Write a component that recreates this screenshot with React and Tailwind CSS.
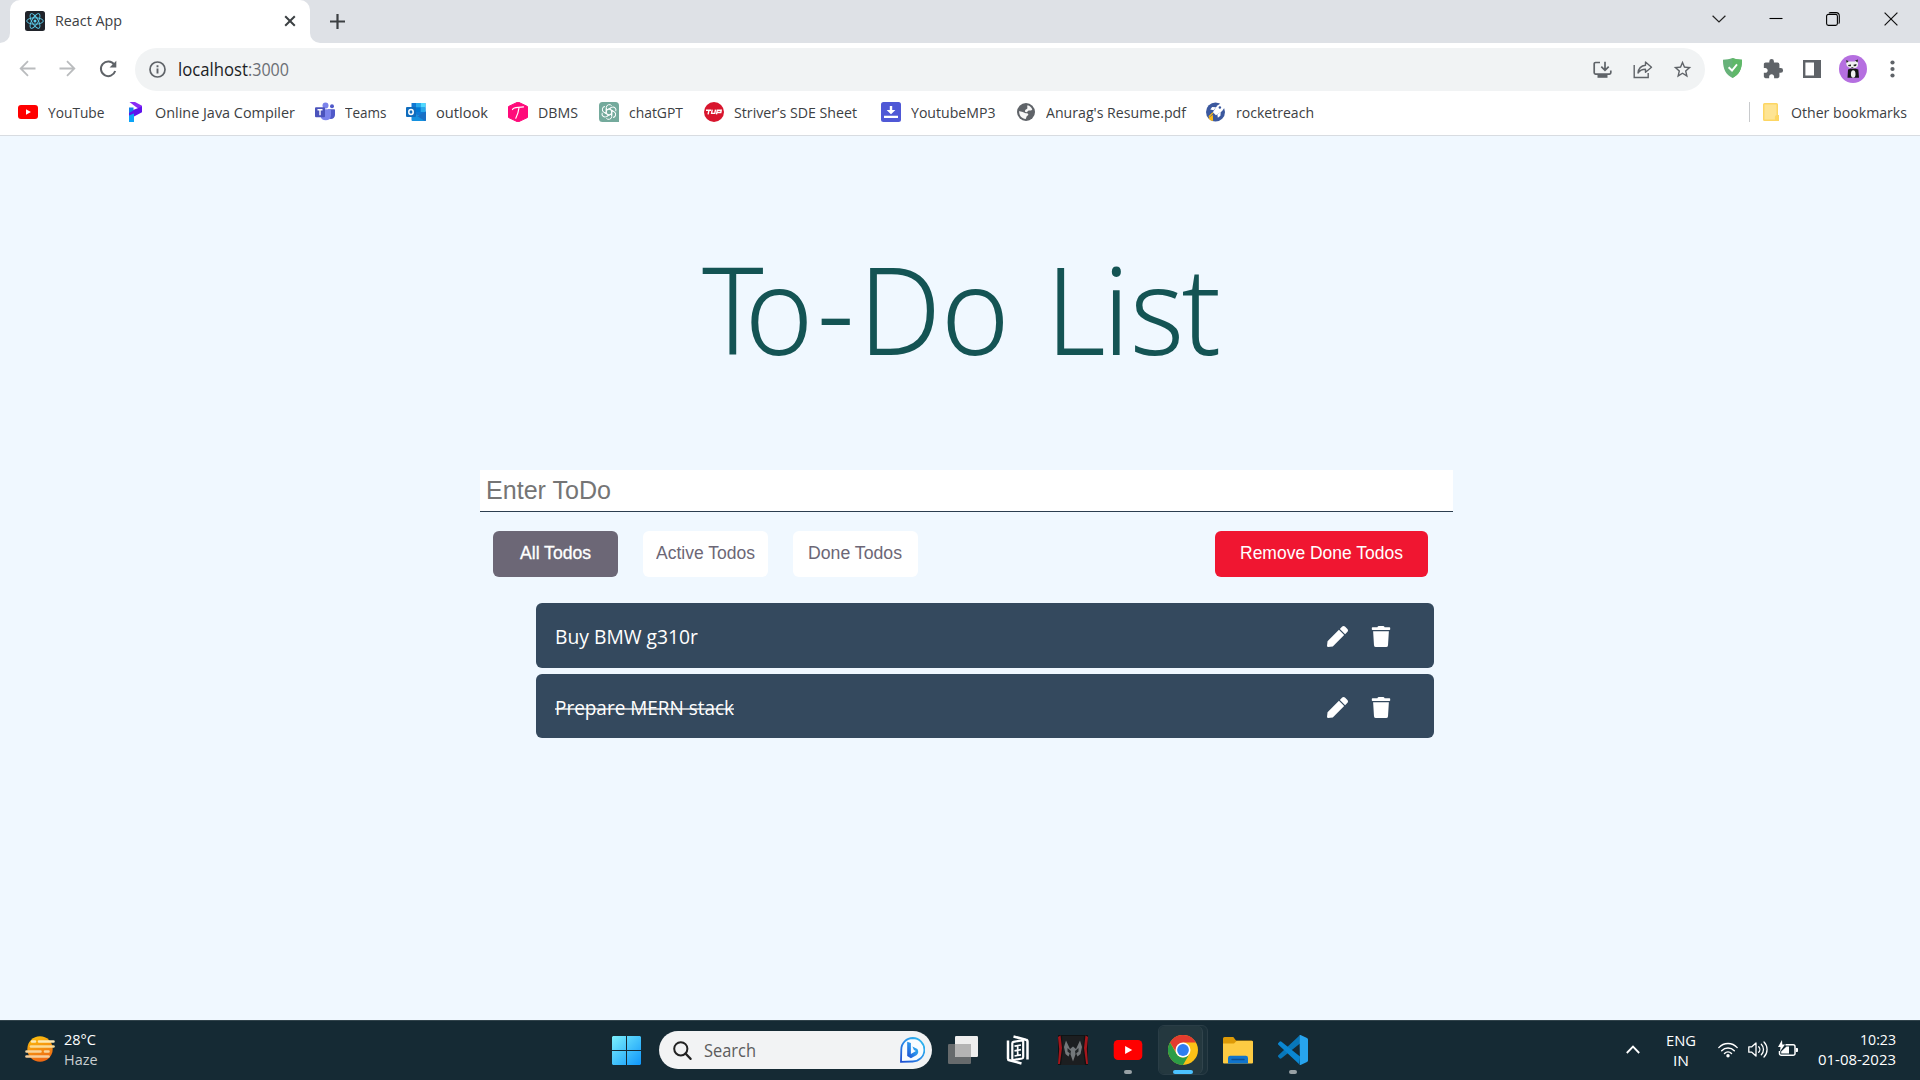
import React, { useLayoutEffect, useRef } from "react";
import { FaPen, FaTrash } from "react-icons/fa";
import { MdExtension, MdStarBorder } from "react-icons/md";

/* Single line of text, condensed or widened to a given width in pixels. */
function Fit({ w, className = "", children }) {
  const ref = useRef(null);
  useLayoutEffect(() => {
    const el = ref.current;
    el.style.transform = "none";
    const natural = el.getBoundingClientRect().width;
    if (natural > 0) el.style.transform = `scaleX(${w / natural})`;
  }, [w, children]);
  return (
    <span className={`block shrink-0 whitespace-nowrap ${className}`} style={{ width: w }}>
      <span ref={ref} className="inline-block origin-left whitespace-pre">
        {children}
      </span>
    </span>
  );
}

function ReactLogo() {
  return (
    <svg width="20" height="20" viewBox="0 0 20 20" fill="none" stroke="#5ccfee" strokeWidth="0.9">
      <rect width="20" height="20" rx="2.5" fill="#20232a" stroke="none" />
      <ellipse cx="10" cy="10" rx="8.3" ry="3.2" />
      <ellipse cx="10" cy="10" rx="8.3" ry="3.2" transform="rotate(60 10 10)" />
      <ellipse cx="10" cy="10" rx="8.3" ry="3.2" transform="rotate(120 10 10)" />
      <circle cx="10" cy="10" r="1.5" fill="#5ccfee" stroke="none" />
    </svg>
  );
}

function YouTubeIcon({ className }) {
  return (
    <svg className={className} viewBox="0 0 30 21">
      <rect width="30" height="21" rx="4.5" fill="#ff0000" />
      <path d="M12 6.2v8.6l7.4-4.3z" fill="#fff" />
    </svg>
  );
}

function TabStrip() {
  return (
    <div className="flex h-[43px] bg-[#dee1e6]">
      <div className="flex w-[10px] items-end bg-white">
        <div className="h-full w-full rounded-br-[10px] bg-[#dee1e6]" />
      </div>
      <div className="w-[300px] bg-[#dee1e6]">
        <div className="flex h-[43px] items-center rounded-t-[10px] bg-white pb-[1px] pl-[15px]">
          <ReactLogo />
          <Fit w={67} className="-mt-[2px] ml-[10px] text-[15px] leading-[20px] text-[#3c4043]">React App</Fit>
          <svg className="ml-[162px]" width="12" height="12" viewBox="0 0 12 12" stroke="#3c4043" strokeWidth="2">
            <path d="M1.2 1.2l9.6 9.6M10.8 1.2l-9.6 9.6" />
          </svg>
        </div>
      </div>
      <div className="w-[10px] bg-white">
        <div className="h-full w-full rounded-bl-[10px] bg-[#dee1e6]" />
      </div>
      <svg className="ml-[9px] mt-[13px]" width="17" height="17" viewBox="0 0 17 17" stroke="#3c4043" strokeWidth="2.2">
        <path d="M1 8.5h15M8.500 1v15" />
      </svg>
      <div className="ml-auto flex h-[37px] items-center pr-[22px]">
        <svg width="14" height="8" viewBox="0 0 14 8" fill="none" stroke="#222" strokeWidth="1.2">
          <path d="M.6.8L7 7 13.4.8" />
        </svg>
        <svg className="ml-[43px]" width="14" height="14" viewBox="0 0 14 14" stroke="#000" strokeWidth="1.1">
          <path d="M.5 6.500h13" />
        </svg>
        <svg className="ml-[43px]" width="14" height="14" viewBox="0 0 14 14" fill="none" stroke="#000" strokeWidth="1.1">
          <rect x=".6" y="2.4" width="10.8" height="11" rx="1.8" />
          <path d="M3 1.2c.5-.5 1-.6 1.700-.6H10a3.300 3.300 0 0 1 3.300 3.300v6c0 .7-.2 1.200-.6 1.700" />
        </svg>
        <svg className="ml-[44px]" width="14" height="14" viewBox="0 0 14 14" stroke="#111" strokeWidth="1.2">
          <path d="M.6.6l12.800 12.800M13.400.6L.6 13.400" />
        </svg>
      </div>
    </div>
  );
}

function Toolbar() {
  return (
    <div className="flex h-[53px] items-center">
      <svg className="ml-[19px] mt-[-2px]" width="17" height="17" viewBox="0 0 17 17" fill="none" stroke="#babcbe" strokeWidth="1.800">
        <path d="M16.500 8.500H2M9 1.200L1.700 8.500 9 15.800" />
      </svg>
      <svg className="ml-[23px] mt-[-2px]" width="17" height="17" viewBox="0 0 17 17" fill="none" stroke="#babcbe" strokeWidth="1.800">
        <path d="M.5 8.500H15M8 1.200l7.300 7.300L8 15.800" />
      </svg>
      <svg className="ml-[23px] mt-[-1px]" width="18" height="18" viewBox="0 0 18 18" fill="none" stroke="#5f6368" strokeWidth="2">
        <path d="M15.200 4.600A7.300 7.300 0 1 0 16.200 11" />
        <path d="M17.300.8v6.700h-6.700z" fill="#5f6368" stroke="none" />
      </svg>
      <div className="ml-[18px] flex h-[43px] w-[1570px] items-center rounded-full bg-[#f1f3f4] pl-[14px]">
        <svg width="17" height="17" viewBox="0 0 17 17" fill="none" stroke="#5f6368" strokeWidth="1.700">
          <circle cx="8.500" cy="8.500" r="7.500" />
          <path d="M8.500 7.500v5M8.500 4.300v1.900" strokeWidth="1.900" />
        </svg>
        <Fit w={70} className="-mt-[2px] ml-[12px] text-[17.500px] leading-[24px] text-[#202124]">localhost</Fit>
        <Fit w={41} className="-mt-[2px] text-[17.500px] leading-[24px] text-[#6b6f74]">:3000</Fit>
        <svg className="ml-auto" width="19" height="18" viewBox="0 0 19 18" fill="none" stroke="#5f6368" strokeWidth="1.700">
          <path d="M7 1.500H2.500a1.300 1.300 0 0 0-1.300 1.300v9a1.300 1.300 0 0 0 1.300 1.300h14a1.300 1.300 0 0 0 1.300-1.300V9.500M12 .8v8M8.300 5.600L12 9.300l3.700-3.700" />
          <path d="M4.500 14h10v2.800h-10z" fill="#5f6368" stroke="none" />
        </svg>
        <svg className="ml-[21px]" width="20" height="19" viewBox="0 0 20 19" fill="none" stroke="#5f6368" strokeWidth="1.400">
          <path d="M1.200 5v12.500h14V13" />
          <path d="M12.500 2l6 5.200-6 5V9.300C8.800 9.300 6.700 10.500 5 13c.4-4.300 3-7.300 7.500-7.800z" strokeLinejoin="round" />
        </svg>
        <MdStarBorder className="ml-[19px] mr-[12px] size-[21px] text-[#5f6368]" />
      </div>
      <svg className="ml-[18px] mt-[-3px]" width="19" height="20" viewBox="0 0 19 20">
        <path d="M9.500 0c3 1.200 6 1.500 9.500 1.700C19.200 9.500 17 16.500 9.500 20 2 16.500-.2 9.500 0 1.700 3.500 1.500 6.500 1.200 9.500 0z" fill="#67b279" />
        <path d="M9.500 0v20C17 16.500 19.200 9.500 19 1.700 15.500 1.500 12.500 1.200 9.500 0z" fill="#5fb868" />
        <path d="M5.600 9.300L9 12.500l5-6.200" stroke="#fff" strokeWidth="1.900" fill="none" />
      </svg>
      <MdExtension className="ml-[20px] mt-[-2px] size-[22px] text-[#5f6368]" />
      <svg className="ml-[19px] mt-[-1px]" width="18" height="18" viewBox="0 0 18 18">
        <path d="M0 0h18v18H0zM2.400 2.400v13.200h8.600V2.400z" fill="#5f6368" fillRule="evenodd" />
      </svg>
      <svg className="ml-[18px] mt-[-1px]" width="28" height="28" viewBox="0 0 28 28">
        <circle cx="14" cy="14" r="14" fill="#b56fe0" />
        <path d="M9 14.500c2-1.500 8-1.500 10.300 0l.7 8.300H8.500z" fill="#141414" />
        <ellipse cx="14.200" cy="19" rx="2.300" ry="3.800" fill="#f0f0f0" />
        <path d="M7.300 6l2.400.4h6l3-1.400.3 3.200c.4 3.600-1.500 5-4.900 5.100-3.600 0-6.200-.9-6.800-4.200z" fill="#f0f0f0" />
        <path d="M7 5.300l2.700.8-2 2zM19 4.600l-3 .9 2.600 2zM9 10l3-.5v1.800H9.600zM14.500 9.700l3-.7-.4 2-2.300.3zM12.300 12h2v.7h-2z" fill="#222" />
      </svg>
      <svg className="ml-[23px] mt-[-1px]" width="5" height="18" viewBox="0 0 5 18" fill="#5f6368">
        <circle cx="2.500" cy="2.500" r="2.100" />
        <circle cx="2.500" cy="9" r="2.100" />
        <circle cx="2.500" cy="15.500" r="2.100" />
      </svg>
    </div>
  );
}

const icons = {
  youtube: <YouTubeIcon className="h-[14px] w-[20px]" />,
  java: (
    <svg width="20" height="20" viewBox="0 0 20 20">
      <path d="M4.500 0h5.500l7 3.800v5l-6-3.800z" fill="#8a2bf5" />
      <path d="M4 9.500l8-3 5-2v5.800L9 14.500 4 16z" fill="#5f12ec" />
      <path d="M4 5.500h4.500v3L4 11z" fill="#1480e8" />
      <path d="M4 13.500l5-2V20H4z" fill="#0ba4f7" />
    </svg>
  ),
  teams: (
    <svg width="20" height="20" viewBox="0 0 20 20">
      <circle cx="10.500" cy="3.500" r="3" fill="#7b83eb" />
      <circle cx="17" cy="4.200" r="2" fill="#5059c9" />
      <path d="M13 7.300h6.300a.7.700 0 0 1 .7.700v5a4 4 0 0 1-4.500 4L13 16z" fill="#5059c9" />
      <path d="M6 7.300h9a1 1 0 0 1 1 1v5.500a5.300 5.300 0 0 1-10.500 0z" fill="#7b83eb" />
      <rect y="5.200" width="10" height="10" rx="1" fill="#4b53bc" />
      <path d="M2.500 7.800h5M5 7.800v5.400" stroke="#fff" strokeWidth="1.400" />
    </svg>
  ),
  outlook: (
    <svg width="20" height="20" viewBox="0 0 20 20">
      <rect x="5.500" y="1" width="14" height="12" rx=".6" fill="#0f78d4" />
      <path d="M10 1h4.700v4.500H10z" fill="#28a8ea" />
      <path d="M14.700 1h4.800v4.500h-4.800z" fill="#50d9ff" />
      <path d="M10 5.500h4.700V10H10z" fill="#0078d4" />
      <path d="M14.700 5.500h4.800V10h-4.800z" fill="#28a8ea" />
      <path d="M5.500 9.500l7 4 7.500-4V18a1 1 0 0 1-1 1H6.500a1 1 0 0 1-1-1z" fill="#1490df" />
      <path d="M20 9.500V18a1 1 0 0 1-1 1l-8-5z" fill="#1a6fc4" />
      <rect y="5" width="10" height="10" rx="1" fill="#0f6cbd" />
      <ellipse cx="5" cy="10" rx="2.200" ry="2.500" fill="none" stroke="#fff" strokeWidth="1.500" />
    </svg>
  ),
  dbms: (
    <svg width="20" height="20" viewBox="0 0 20 20">
      <path d="M10 0l9.500 4.500v11L10 20 .5 15.500v-11z" fill="#ff0a7a" stroke="#ff0a7a" strokeLinejoin="round" />
      <path d="M4.500 7.500C6 4.500 10 6 15.500 4.800M11 5.800C10.500 10 9.500 13 7.800 16.200" stroke="#fff" strokeWidth="1.200" fill="none" strokeLinecap="round" />
    </svg>
  ),
  gpt: (
    <svg width="20" height="20" viewBox="0 0 20 20" fill="none">
      <path d="M3.500 0h13A3.500 3.500 0 0 1 20 3.500V20H3.500A3.500 3.500 0 0 1 0 16.500v-13A3.500 3.500 0 0 1 3.500 0z" fill="#74aa9c" />
      <g stroke="#fff" strokeWidth="1">
        {[0, 60, 120, 180, 240, 300].map((a) => (
          <path key={a} transform={`rotate(${a} 10 10)`} d="M7.300 11.500V5.500a3 3 0 0 1 5.400-1.700M7.300 8.400L10.500 6.500a3 3 0 0 1 1.500-.4" />
        ))}
      </g>
    </svg>
  ),
  tuf: (
    <svg width="20" height="20" viewBox="0 0 20 20" fill="none">
      <circle cx="10" cy="10" r="10" fill="#d8152d" />
      <path d="M2 8.300h5M4.900 8.300l-.8 4M8.200 7.700l-.6 3.700h3.200l.7-3.700M12.500 12.300l.8-4h3.900l-.4 2.200h-3.500" stroke="#fff" strokeWidth="1.400" />
    </svg>
  ),
  mp3: (
    <svg width="20" height="20" viewBox="0 0 20 20">
      <rect width="20" height="20" rx="2.500" fill="#4f58d6" />
      <path d="M8.800 4h2.400v4h3.200L10 12.300 5.600 8h3.200zM3 13.700h14v2.400H3z" fill="#fff" />
    </svg>
  ),
  globe: (
    <svg width="20" height="20" viewBox="0 0 20 20">
      <circle cx="10" cy="10" r="9" fill="#5f6368" />
      <path d="M11.500 3.200c2.200.6 4 2 4.800 4.300-1 1.300-2.300.8-3.600 1.100-1.400.4-.8 1.500-2.200 1.600-1.300.1-1.900-.9-1.300-2 .6-1 1.900-.8 2.200-1.900.2-.9-.5-1.700.1-3.100z" fill="#f7f7f7" />
      <path d="M3.200 9c1.900.6 3.800.8 5.300 1.700 1.500.8 3.500.3 3.800 1.500.2 1-1.300 1.300-1.700 2.300-.4.900-.3 1.600-.9 2.400C6 16.900 2.800 13.500 3.200 9z" fill="#f7f7f7" />
    </svg>
  ),
  rocket: (
    <svg width="20" height="20" viewBox="0 0 20 20">
      <circle cx="10" cy="10" r="10" fill="#3b589e" />
      <path d="M19.800.3c.5 3.700-.9 7-4 9.700l-5.300 3.500-3.300-3.300L10.500 5C13.200 1.700 16.200 0 19.800.3z" fill="#fff" />
      <path d="M10.500 5L6.500 4.800 4.500 7.300 8 8.200zM15.500 10l-.3 4-2.700 2-.6-3.500z" fill="#fff" />
      <circle cx="14.600" cy="5.300" r="1.300" fill="#3b589e" />
      <path d="M7.200 12.800L2.600 16.200 4.500 18.600 7.500 19.500z" fill="#fdb913" />
      <path d="M7.300 10.800L3 15" stroke="#fdb913" strokeWidth="1.200" />
    </svg>
  ),
};

const bookmarks = [
  { icon: "youtube", label: "YouTube", w: 56.5, slot: "w-[107px] gap-[10px]" },
  { icon: "java", label: "Online Java Compiler", w: 140, slot: "w-[190px] gap-[10px]" },
  { icon: "teams", label: "Teams", w: 41.5, slot: "w-[91px] gap-[10px]" },
  { icon: "outlook", label: "outlook", w: 52, slot: "w-[102px] gap-[10px]" },
  { icon: "dbms", label: "DBMS", w: 40, slot: "w-[91px] gap-[10px]" },
  { icon: "gpt", label: "chatGPT", w: 54, slot: "w-[105px] gap-[10px]" },
  { icon: "tuf", label: "Striver’s SDE Sheet", w: 123, slot: "w-[177px] gap-[10px]" },
  { icon: "mp3", label: "YoutubeMP3", w: 84.5, slot: "w-[135px] gap-[10px]" },
  { icon: "globe", label: "Anurag's Resume.pdf", w: 140, slot: "w-[190px] gap-[10px]" },
  { icon: "rocket", label: "rocketreach", w: 78, slot: "w-[108px] gap-[11px]" },
];

function BookmarksBar() {
  return (
    <div className="flex h-[40px] items-center border-b border-[#d8dce1] pb-[7px] pl-[18px] pr-[13px] text-[15px] leading-[20px] text-[#3c4043]">
      {bookmarks.map((b) => (
        <div key={b.label} className={`flex shrink-0 items-center ${b.slot}`}>
          {icons[b.icon]}
          <Fit w={b.w}>{b.label}</Fit>
        </div>
      ))}
      <div className="ml-auto h-[20px] w-px bg-[#c8cacd]" />
      <svg className="ml-[13px]" width="16" height="18" viewBox="0 0 16 18">
        <path d="M1.500 0h12A1.500 1.500 0 0 1 15 1.500V12a2 2 0 0 1 0 6H1.500A1.500 1.500 0 0 1 0 16.500v-15A1.500 1.500 0 0 1 1.500 0z" fill="#fdd663" />
        <path d="M1.500 1.500h12V12c-1.500.6-2 2-1.500 4.500H1.500z" fill="#fee493" />
      </svg>
      <Fit w={116} className="ml-[12px]">Other bookmarks</Fit>
    </div>
  );
}

function FilterButton({ w, active, children }) {
  return (
    <button
      className={`flex h-[46px] w-[125px] justify-center rounded-[6px] pr-[1px] pt-[11px] text-[17.500px] leading-[22px] ${
        active ? "bg-[#6c6776] text-white [-webkit-text-stroke:0.3px_white]" : "bg-white text-[#6c6776]"
      }`}
    >
      <Fit w={w}>{children}</Fit>
    </button>
  );
}

function TodoRow({ w, done, className, children }) {
  return (
    <li className={`flex items-center rounded-[6px] bg-[#34495e] pl-[19px] pr-[43px] text-white ${className}`}>
      <div className="grid">
        <Fit w={w} className="col-start-1 row-start-1 text-[20px] leading-[28px]">{children}</Fit>
        {done && <div className="col-start-1 row-start-1 mt-[14px] h-[2px] bg-[#bdc3c7]" />}
      </div>
      <FaPen className="-mt-[2px] ml-auto size-[21px]" />
      <FaTrash className="-mt-[2px] ml-[23px] h-[21px] w-[20px]" />
    </li>
  );
}

function TodoPage() {
  return (
    <main className="h-[884px] bg-[#f0f8ff]">
      <h1 className="flex pl-[702px] pt-[82px] font-['Noto_Sans'] text-[122px] font-[260] leading-[180px] text-[#145454]">
        <Fit w={519}>
          <span className="tracking-[-20px]">T</span>
          <span className="tracking-[4px]">o-</span>
          <span className="tracking-[0px]">D</span>
          <span className="tracking-[3px]">o </span>
          <span className="tracking-[-3px]">L</span>
          <span className="tracking-[0px]">i</span>
          <span className="tracking-[-3px]">s</span>
          <span>t</span>
        </Fit>
      </h1>
      <div className="ml-[480px] mt-[72px] w-[973px] font-['Liberation_Sans',Arial,sans-serif]">
        <div className="flex h-[42px] items-center border-b border-[#2c3e50] bg-white pb-[2px] pl-[6px] text-[25px] leading-[30px] text-[#757575]">
          <Fit w={125}>Enter ToDo</Fit>
        </div>
        <div className="mt-[19px] flex gap-[25px] pl-[13px] pr-[25px]">
          <FilterButton w={71} active>All Todos</FilterButton>
          <FilterButton w={99}>Active Todos</FilterButton>
          <FilterButton w={94}>Done Todos</FilterButton>
          <button className="ml-auto flex h-[46px] w-[213px] justify-center rounded-[6px] bg-[#f01631] pr-[1px] pt-[11px] text-[17.500px] leading-[22px] text-white">
            <Fit w={163}>Remove Done Todos</Fit>
          </button>
        </div>
      </div>
      <ul className="ml-[536px] mt-[26px] flex w-[898px] flex-col gap-[6px]">
        <TodoRow w={143} className="h-[65px] pt-[3px]">Buy BMW g310r</TodoRow>
        <TodoRow w={179} done className="h-[64px] pt-[4px]">Prepare MERN stack</TodoRow>
      </ul>
    </main>
  );
}

function WeatherIcon() {
  return (
    <svg width="30" height="28" viewBox="0 0 30 28" strokeLinecap="round" strokeWidth="2.600">
      <defs>
        <linearGradient id="sun" x1="0" y1="0" x2="0.3" y2="1">
          <stop offset="0" stopColor="#fdc60d" />
          <stop offset="1" stopColor="#ee6a13" />
        </linearGradient>
      </defs>
      <circle cx="15" cy="14" r="12.700" fill="url(#sun)" />
      <path d="M7 6.500h3M14 6.500h14.500" stroke="#fde9b5" />
      <path d="M6 11.500h22.500" stroke="#fbdc96" />
      <path d="M1.500 16.500h14M20 16.500h3.500" stroke="#f8d49a" />
      <path d="M1.500 21.500h22" stroke="#f8cd98" />
    </svg>
  );
}

function WindowsIcon() {
  return (
    <svg width="29" height="29" viewBox="0 0 29 29">
      <defs>
        <linearGradient id="win" x1="0" y1="0" x2="1" y2="1" gradientUnits="objectBoundingBox">
          <stop offset="0" stopColor="#7cf0fd" />
          <stop offset="0.5" stopColor="#44c3fb" />
          <stop offset="1" stopColor="#0f96fb" />
        </linearGradient>
      </defs>
      <path d="M1 0h13v14H0V1zM15 0h13l1 1v13H15zM0 15h14v14H1l-1-1zM15 15h14v13l-1 1H15z" fill="url(#win)" />
    </svg>
  );
}

function BingIcon() {
  return (
    <svg width="25" height="26" viewBox="0 0 25 26">
      <defs>
        <linearGradient id="bing" x1="1" y1="0" x2="0" y2="1">
          <stop offset="0" stopColor="#2fc0ee" />
          <stop offset="0.5" stopColor="#2a8eea" />
          <stop offset="1" stopColor="#1b4bd0" />
        </linearGradient>
      </defs>
      <path d="M12.800 1A11.500 11.500 0 1 1 12.500 24.500L1 24.800 1.300 12.500A11.500 11.500 0 0 1 12.800 1z" fill="#f8fcff" stroke="url(#bing)" strokeWidth="1.800" />
      <path d="M7.200 4.700l3.700 1.300v11l5-2.900-2-1.200-1.500-3.500 5 2.600c1.500 2 1 5-1 6.200l-5.500 3.100-3.700-2.200z" fill="url(#bing)" />
    </svg>
  );
}

function TaskViewIcon() {
  return (
    <svg width="30" height="28" viewBox="0 0 30 28">
      <rect y="8" width="23" height="20" rx="1.200" fill="#666a6c" />
      <rect x="7" y="0" width="23" height="21" rx="1.200" fill="#eeeeee" />
      <path d="M7 8h16v13H8.200A1.200 1.200 0 0 1 7 19.800z" fill="#b4b4b4" />
    </svg>
  );
}

function CardsIcon() {
  return (
    <svg width="24" height="30" viewBox="0 0 24 30" fill="none" stroke="#fff" strokeWidth="2.200">
      <path d="M6.300 8.300a1.500 1.500 0 0 1 1.200-1.500l8.500-1.500a1 1 0 0 1 1.200 1V22a1.500 1.500 0 0 1-1.200 1.500L7.500 25a1 1 0 0 1-1.200-1z" />
      <path d="M7.500 1.500l12.300 3.200a2 2 0 0 1 1.700 2V24.500" strokeWidth="2.500" />
      <path d="M2 5.500v17.800a2 2 0 0 0 1.500 2l12 3.200" strokeWidth="2.500" />
      <path d="M8.500 11.200l6.500-1.200M11.700 10.600v4.200M8.500 15.800l6.500-1.200M8.500 21l6.500-1.200M11.700 15.500v4.800" strokeWidth="1.700" />
    </svg>
  );
}

function PredatorIcon() {
  return (
    <svg width="30" height="30" viewBox="0 0 30 30">
      <path d="M0 0h30v30H0z" fill="#101314" />
      <path d="M4 1h22l-1 14 2 15H3l2-15z" fill="#1c1e20" />
      <path d="M0 2l2.500-1.500L4 13 1.800 29H0l1.200-15zM30 2l-2.500-1.500L26 13l2.200 16H30l-1.200-15z" fill="#a5161c" />
      <path d="M8 5.500l4 8.500 3-2.500 3 2.500 4-8.500 2 6.500-1.500 7-3 2.500-1.500-3.500-3 8.500-3-8.500-1.500 3.500-3-2.500L6 12z" fill="#74787b" />
      <path d="M9.500 13l3.500 3-.5 3-3-2.500zM20.500 13L17 16l.5 3 3-2.500z" fill="#222628" />
    </svg>
  );
}

function ChromeIcon() {
  return (
    <svg width="30" height="30" viewBox="0 0 30 30">
      <circle cx="15" cy="15" r="15" fill="#fbc116" />
      <path d="M2 7.500A15 15 0 0 1 28 7.500H15L9 18.500z" fill="#e33b2e" />
      <path d="M2 7.500A15 15 0 0 0 15 30l6.500-11.300A7.500 7.500 0 0 1 8.500 18.700z" fill="#2c9d46" />
      <circle cx="15" cy="15" r="7.500" fill="#fff" />
      <circle cx="15" cy="15" r="5.900" fill="#2f7df0" />
    </svg>
  );
}

function FolderIcon() {
  return (
    <svg width="30" height="27" viewBox="0 0 30 27">
      <path d="M0 1.500A1.500 1.500 0 0 1 1.500 0h8.800l2.700 3.500h15.500A1.500 1.500 0 0 1 30 5v8H0z" fill="#dd9a07" />
      <path d="M0 6.500h11l2.500-2.500H29a1 1 0 0 1 1 1v20.500a1 1 0 0 1-1 1H1a1 1 0 0 1-1-1z" fill="#fdcb43" />
      <path d="M5 26.500V21a2.300 2.300 0 0 1 2.300-2.300h15.400A2.300 2.300 0 0 1 25 21v5.500z" fill="#1074cc" />
      <path d="M9 22.500h12" stroke="#0b4f93" strokeWidth="1.400" strokeLinecap="round" />
    </svg>
  );
}

function VSCodeIcon() {
  return (
    <svg width="30" height="30" viewBox="0 0 30 30">
      <path d="M22 8.500L3.500 23.200a1.500 1.500 0 0 1-2 0L.4 22a1.200 1.200 0 0 1 0-1.800L21.500.5z" fill="#0877b9" />
      <path d="M22 21.500L3.500 6.800a1.500 1.500 0 0 0-2 0L.4 8a1.200 1.200 0 0 0 0 1.800L21.500 29.500z" fill="#0a86d1" />
      <path d="M21.500.3c.3-.3.7-.3 1-.2l6 2.700c1 .5 1.500 1 1.500 2v20.400c0 1-.5 1.500-1.500 2l-6 2.700c-.3.100-.7.100-1-.2l.5-.7z" fill="#27a4ee" />
    </svg>
  );
}

function TaskItem({ children, dot, className = "" }) {
  return (
    <div className={`flex h-[60px] shrink-0 flex-col items-center ${className}`}>
      <div className="flex h-[60px] shrink-0 items-center">{children}</div>
      {dot && <div className="-mt-[10px] h-[4px] w-[8px] shrink-0 rounded-full bg-[#98a1a5]" />}
    </div>
  );
}

function Taskbar() {
  return (
    <footer className="flex h-[60px] items-center border-t border-[#31434b] bg-[#152a34] pb-[1px]">
      <div className="ml-[25px] w-[30px] pb-[2px]">
        <WeatherIcon />
      </div>
      <div className="-mt-[3px] ml-[9px] w-[548px] text-[15px] leading-[20px]">
        <Fit w={32} className="text-white">28°C</Fit>
        <Fit w={33.5} className="text-[#c9ced1]">Haze</Fit>
      </div>
      <WindowsIcon />
      <div className="ml-[18px] flex h-[38px] w-[273px] items-center rounded-full bg-[#f2f3f4] pl-[14px] pr-[7px]">
        <svg width="19" height="19" viewBox="0 0 19 19" fill="none" stroke="#222" strokeWidth="2">
          <circle cx="7.800" cy="7.800" r="6.600" />
          <path d="M12.500 12.500l5 5.300" strokeWidth="2.400" strokeLinecap="round" />
        </svg>
        <Fit w={52} className="ml-[12px] text-[17.500px] leading-[24px] text-[#5c5c5c]">Search</Fit>
        <div className="ml-auto"><BingIcon /></div>
      </div>
      <TaskItem className="ml-[16px]"><TaskViewIcon /></TaskItem>
      <TaskItem className="ml-[28px]"><CardsIcon /></TaskItem>
      <TaskItem className="ml-[28px]"><PredatorIcon /></TaskItem>
      <TaskItem className="ml-[25px]" dot><YouTubeIcon className="h-[20px] w-[30px]" /></TaskItem>
      <div className="ml-[15px] flex h-[50px] w-[50px] rounded-[6px] border border-[#2a3d46] bg-[#1b3039]">
        <div className="flex h-[48px] w-[44px] flex-col items-center rounded-[6px] border-r border-[#31444c] bg-[#24383f] pt-[9px]">
          <div className="ml-[5px]"><ChromeIcon /></div>
          <div className="ml-[5px] mt-[5px] h-[4px] w-[20px] rounded-full bg-[#4cc2ff]" />
        </div>
      </div>
      <TaskItem className="ml-[15px]"><FolderIcon /></TaskItem>
      <TaskItem className="ml-[25px]" dot><VSCodeIcon /></TaskItem>
      <div className="-mt-[1px] ml-auto flex items-center pr-[24px] text-[15px] leading-[20px] text-white">
        <svg width="14" height="9" viewBox="0 0 14 9" fill="none" stroke="#fff" strokeWidth="1.800">
          <path d="M.8 8L7 1.600 13.200 8" />
        </svg>
        <div className="ml-[26px] flex w-[30px] flex-col items-center">
          <Fit w={30}>ENG</Fit>
          <Fit w={16}>IN</Fit>
        </div>
        <svg className="ml-[22px]" width="20" height="16" viewBox="0 0 20 16" fill="none" stroke="#fff" strokeWidth="1.400" strokeLinecap="round">
          <path d="M.8 5.600a12.500 12.500 0 0 1 18.400 0M3.700 8.700a8.700 8.700 0 0 1 12.600 0M6.500 11.500a5 5 0 0 1 7 0" />
          <circle cx="10" cy="13.700" r="1.700" fill="#fff" stroke="none" />
        </svg>
        <svg className="ml-[10px]" width="20" height="17" viewBox="0 0 20 17" fill="none" stroke="#fff" strokeWidth="1.300" strokeLinecap="round">
          <path d="M.8 5.800v5.400h3L8 15V2L3.800 5.800z" strokeLinejoin="round" />
          <path d="M10.700 5.700a4 4 0 0 1 0 5.600M13.300 3.300a7.300 7.300 0 0 1 0 10.400M16 1a10.700 10.700 0 0 1 0 15" />
        </svg>
        <svg className="ml-[10px] mt-[-2px]" width="20" height="17" viewBox="0 0 20 17">
          <path d="M7.500 4.700h7.700a1.800 1.800 0 0 1 1.800 1.800v7a1.800 1.800 0 0 1-1.800 1.800H3.300a1.800 1.800 0 0 1-1.800-1.800V11" fill="none" stroke="#fff" strokeWidth="1.500" />
          <path d="M3.200 13.600v-2L8.500 6.500H11v7.100zM17.800 8h1.400a.8.800 0 0 1 .8.800v2.400a.8.800 0 0 1-.8.800h-1.400z" fill="#fff" />
          <path d="M4 0L0 7h2.500L2 11.500 7 4.500H4.300z" fill="#fff" />
        </svg>
        <div className="-mt-[2px] ml-[20px] flex flex-col items-end">
          <Fit w={36}>10:23</Fit>
          <Fit w={78}>01-08-2023</Fit>
        </div>
      </div>
    </footer>
  );
}

export default function App() {
  return (
    <div className="h-[1080px] w-[1920px] overflow-hidden bg-white font-['Open_Sans','Noto_Sans',sans-serif]">
      <TabStrip />
      <Toolbar />
      <BookmarksBar />
      <TodoPage />
      <Taskbar />
    </div>
  );
}
